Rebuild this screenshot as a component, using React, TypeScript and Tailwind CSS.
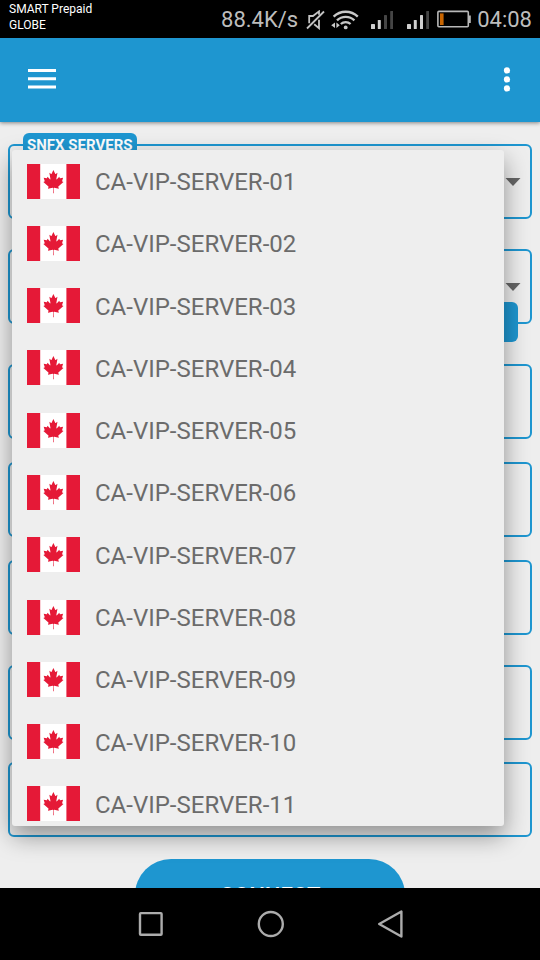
import { useState } from 'react';
import type { JSX } from 'react';

type Server = {
  id: string;
  name: string;
};

const SERVERS: Server[] = Array.from({ length: 11 }, (_, i) => {
  const id = String(i + 1).padStart(2, '0');
  return { id, name: `CA-VIP-SERVER-${id}` };
});

function MuteIcon(): JSX.Element {
  return (
    <svg width="19" height="20" viewBox="0 0 19 20" fill="none" stroke="#c4c4c4" strokeWidth="1.8" aria-hidden="true">
      <path d="M1 18.5 18 1.5" />
      <path d="M3.2 13.2V6H7l6-4.6v3.4" />
      <path d="M8.2 14.2 13 18.2V9.8" />
    </svg>
  );
}

function WifiIcon(): JSX.Element {
  return (
    <svg width="28" height="20" viewBox="0 0 28 20" fill="none" stroke="#c8c8c8" strokeWidth="2.3" aria-hidden="true">
      <path d="M2.6 6.6a17.5 17.5 0 0 1 24.2 0" />
      <path d="M6 10.4a12.4 12.4 0 0 1 17.4 0" />
      <path d="M9.8 14a7.2 7.2 0 0 1 9.8 0" />
      <circle cx="14.7" cy="17.4" r="1.9" fill="#c8c8c8" stroke="none" />
      <path d="M4 12.4v5.6L.2 15.2zM5.4 12.4v5.6l3.4-2.8z" fill="#c8c8c8" stroke="none" />
    </svg>
  );
}

function SignalIcon({ level }: { level: number }): JSX.Element {
  const heights = [5, 9, 14, 18];
  return (
    <svg width="22" height="20" viewBox="0 0 22 20" aria-hidden="true">
      {heights.map((h, i) => (
        <rect
          key={h}
          x={i === 0 ? 0 : i * 6.2 + 0.6}
          y={19 - h}
          width={i === 0 ? 4 : 3}
          height={h}
          rx="0.6"
          fill={i < level ? '#cfcfcf' : '#454545'}
        />
      ))}
    </svg>
  );
}

function BatteryIcon(): JSX.Element {
  return (
    <svg width="34" height="20" viewBox="0 0 34 20" aria-hidden="true">
      <rect x="0.9" y="1.4" width="30.4" height="15.4" rx="1" fill="none" stroke="#b8b8b8" strokeWidth="1.6" />
      <rect x="3" y="3.4" width="3.6" height="11.6" fill="#c96500" />
      <path d="M32 5.4h1.8V13H32z" fill="#b8b8b8" />
    </svg>
  );
}

function CanadaFlag(): JSX.Element {
  return (
    <svg width="53" height="35" viewBox="0 0 53 35" className="mb-0.5 shrink-0" aria-hidden="true">
      <path d="M0 0h53v35H0z" fill="#fff" />
      <path d="M0 0h13.2v35H0zM39.4 0H53v35H39.4z" fill="#e51937" />
      <path
        transform="translate(26.4 17.6) scale(0.0054 0.0058)"
        fill="#e51937"
        d="m-60 2030 15-863a95 95 0 0 0-111-98l-859 151 116-320a65 65 0 0 0-20-73l-941-762 212-99a65 65 0 0 0 34-79l-186-572 542 115a65 65 0 0 0 73-38l105-247 423 454a65 65 0 0 0 111-57l-204-1052 327 189a65 65 0 0 0 91-27l332-652 332 652a65 65 0 0 0 91 27l327-189-204 1052a65 65 0 0 0 111 57l423-454 105 247a65 65 0 0 0 73 38l542-115-186 572a65 65 0 0 0 34 79l212 99-941 762a65 65 0 0 0-20 73l116 320-859-151a95 95 0 0 0-111 98l15 863z"
      />
    </svg>
  );
}

function Caret(): JSX.Element {
  return (
    <svg width="16" height="8" viewBox="0 0 16 8" aria-hidden="true">
      <path d="M0.5 0h15L8 8z" fill="#666" />
    </svg>
  );
}

function StatusBar(): JSX.Element {
  return (
    <div className="flex h-[38px] shrink-0 items-center justify-between bg-black pr-2 pl-[9px] text-[#bdbdbd]">
      <div className="self-start pt-px text-xs leading-4 text-white">
        <div>SMART Prepaid</div>
        <div>GLOBE</div>
      </div>
      <div className="flex items-center pt-0.5 text-[22px] leading-6">
        <span className="mr-2">88.4K/s</span>
        <div className="mr-1.5 flex items-center">
          <span className="mr-1.5"><MuteIcon /></span>
          <span className="mr-3"><WifiIcon /></span>
          <span className="mr-3.5"><SignalIcon level={2} /></span>
          <span className="mr-2"><SignalIcon level={3} /></span>
          <BatteryIcon />
        </div>
        <span>04:08</span>
      </div>
    </div>
  );
}

function AppBar(): JSX.Element {
  return (
    <header className="z-10 flex h-[84px] shrink-0 items-center justify-between bg-[#1e96d0] px-4 pb-0.5 shadow-[0_1px_4px_rgba(0,0,0,0.45)]">
      <button type="button" aria-label="Menu" className="p-3">
        <svg width="28" height="20" viewBox="0 0 28 20" fill="#fff">
          <path d="M0 0h28v3H0zM0 8.3h28v3H0zM0 16.6h28v3H0z" />
        </svg>
      </button>
      <button type="button" aria-label="More options" className="px-3 py-2">
        <svg width="10" height="26" viewBox="0 0 10 26" fill="#fff">
          <circle cx="5" cy="4.4" r="3.1" />
          <circle cx="5" cy="13.4" r="3.1" />
          <circle cx="5" cy="22.4" r="3.1" />
        </svg>
      </button>
    </header>
  );
}

function Panel(): JSX.Element {
  return <div className="h-[75px] rounded-md border-2 border-[#1e96d0]" />;
}

function Spinner({ label }: { label: string }): JSX.Element {
  return (
    <button
      type="button"
      aria-haspopup="listbox"
      aria-label={label}
      className="flex h-[75px] w-full items-center justify-end rounded-md border-2 border-[#1e96d0] px-[9px]"
    >
      <Caret />
    </button>
  );
}

type ServerMenuProps = {
  selected: string;
  onSelect: (id: string) => void;
};

function ServerMenu({ selected, onSelect }: ServerMenuProps): JSX.Element {
  return (
    <div className="absolute top-7 right-9 bottom-[62px] left-3 z-20 overflow-hidden rounded-[3px] bg-[#eee] pt-px shadow-[0_10px_24px_rgba(0,0,0,0.4)]">
      <ul role="listbox" aria-label="Servers" className="grid h-[685px] auto-rows-fr">
        {SERVERS.map((s) => (
          <li key={s.id} role="option" aria-selected={s.id === selected}>
            <button
              type="button"
              onClick={() => onSelect(s.id)}
              className="flex h-full w-full items-center gap-[15px] px-[15px] text-left text-2xl text-[#6b6b6b]"
            >
              <CanadaFlag />
              {s.name}
            </button>
          </li>
        ))}
      </ul>
    </div>
  );
}

function NavBar(): JSX.Element {
  return (
    <nav className="z-30 flex h-[72px] shrink-0 items-center justify-center bg-black">
      <button type="button" aria-label="Recent apps" className="flex w-[120px] justify-center">
        <svg width="28" height="28" viewBox="0 0 28 28" fill="none" stroke="#acacac" strokeWidth="2.4">
          <rect x="4" y="3.1" width="21.6" height="21.6" rx="0.8" />
        </svg>
      </button>
      <button type="button" aria-label="Home" className="flex w-[120px] justify-center">
        <svg width="28" height="28" viewBox="0 0 28 28" fill="none" stroke="#acacac" strokeWidth="2.4">
          <circle cx="14.8" cy="14" r="12" />
        </svg>
      </button>
      <button type="button" aria-label="Back" className="flex w-[120px] justify-center">
        <svg width="28" height="28" viewBox="0 0 28 28" fill="none" stroke="#acacac" strokeWidth="2.4" strokeLinejoin="round">
          <path d="M25.4 1.5v25L3.2 14z" />
        </svg>
      </button>
    </nav>
  );
}

export default function App(): JSX.Element {
  const [selected, setSelected] = useState('01');

  return (
    <div className="flex h-screen flex-col overflow-hidden bg-[#eee] font-[Roboto,sans-serif]">
      <StatusBar />
      <AppBar />
      <main className="relative min-h-0 flex-1 overflow-hidden px-2 pt-[22px]">
        <div className="flex flex-col gap-10">
          <div className="flex flex-col gap-[30px]">
            <div className="relative">
              <Spinner label="Server" />
              <span className="absolute -top-[11px] left-[15px] rounded-md bg-[#1e96d0] px-1 text-[15px] leading-6 font-bold text-white">
                SNFX SERVERS
              </span>
            </div>
            <div className="relative">
              <Spinner label="Network" />
              <button
                type="button"
                aria-label="Edit"
                className="absolute right-3.5 -bottom-[18px] h-10 w-24 rounded-md bg-[#1e96d0]"
              />
            </div>
          </div>
          <div className="flex flex-col gap-[30px]">
            <div className="flex flex-col gap-[23px]">
              <Panel />
              <Panel />
              <Panel />
            </div>
            <div className="flex flex-col gap-[22px]">
              <Panel />
              <Panel />
              <button
                type="button"
                className="h-[72px] w-[270px] self-center rounded-full bg-[#1e96d0] text-[22px] font-medium text-white"
              >
                CONNECT
              </button>
            </div>
          </div>
        </div>
        <ServerMenu selected={selected} onSelect={setSelected} />
      </main>
      <NavBar />
    </div>
  );
}
